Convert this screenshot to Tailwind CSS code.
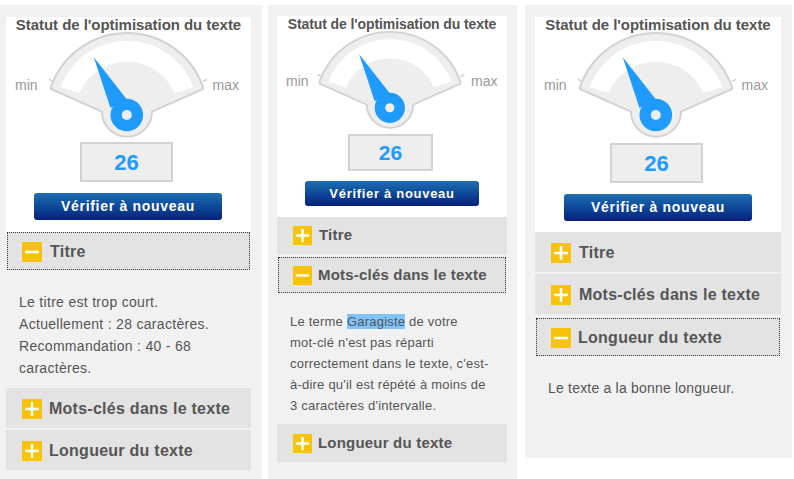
<!DOCTYPE html>
<html>
<head>
  <title>Statut de l'optimisation du texte</title>
  <script src="https://cdn.jsdelivr.net/npm/@tailwindcss/browser@4"></script>
</head>
<body class="bg-white font-['Liberation_Sans',Arial,sans-serif] text-[#555] overflow-hidden">
<div class="flex items-start w-[794px] h-[479px]">

  <!-- panel 1 : Titre open -->
  <div class="w-[262px] h-[474px] mt-[5px] pt-[12px] pl-[6px] bg-[#f1f1f1]">
    <div class="w-[245px] h-[215px] bg-white">
      <h2 class="h-[16px] text-center text-[15px] leading-[16px] font-bold tracking-[-0.05px] whitespace-nowrap">Statut de l'optimisation du texte</h2>
      <div class="flex -mt-[3px] pl-[9px]">
        <span class="w-[27.5px] mt-[46px] text-[14px] leading-[18px] text-[#999]">min</span>
        <svg class="w-[168px] h-[110px] shrink-0" viewBox="-4 0 168 110">
          <path d="M2 49.3L6 51.3M156 51.3L160 49.3" stroke="#ccc" stroke-width="1.5" fill="none"/>
          <path d="M4 57A80.5 80.5 0 0 1 156 57L156 59L105 81.7A24.5 24.5 0 0 1 55 81.7L4 59Z" fill="#eee" stroke="#d2d2d2" stroke-width="2" stroke-linejoin="round"/>
          <path d="M13.5 57A71 71 0 0 1 146.5 57L127.5 63A51.7 51.7 0 0 0 32.5 63Z" fill="#fff"/>
          <path d="M46.8 27.3L63.5 78L79.5 69Z" fill="#1e9bfd"/>
          <circle cx="79.8" cy="85" r="16.3" fill="#1e9bfd"/>
          <circle cx="79.8" cy="85" r="5" fill="#eee"/>
        </svg>
        <span class="mt-[46px] pl-[2px] text-[14px] leading-[18px] text-[#999]">max</span>
      </div>
      <div class="w-[93px] h-[40px] mt-[2px] ml-[74px] flex items-center justify-center bg-[#eee] border-2 border-[#d2d2d2] text-[22px] font-bold text-[#1e9bfd]">26</div>
      <div class="w-[188px] h-[27px] mt-[11px] ml-[28px] flex items-center justify-center rounded-[3px] bg-linear-to-b from-[#1f6fb2] to-[#0a1f7d] text-white text-[14px] font-bold tracking-[0.7px]">Vérifier à nouveau</div>
    </div>
    <div class="w-[243px] h-[38px] mx-[1px] pt-[2px] flex items-center gap-[8px] pl-[14px] bg-[#e3e3e3] border border-dotted border-[#333] text-[16px] font-bold tracking-[0.26px]">
      <svg class="w-[20px] h-[20px]" viewBox="0 0 20 20"><rect width="20" height="20" fill="#f7c30a"/><path d="M3 10H17" stroke="#fff" stroke-width="2.5"/></svg>
      <span>Titre</span>
    </div>
    <div class="h-[118px] pt-[21px] pl-[13px] w-[225px] text-[14px] leading-[22px] tracking-[0.3px]">Le titre est trop court.<br>Actuellement : 28 caractères.<br>Recommandation : 40 - 68 caractères.</div>
    <div class="flex flex-col gap-[2px]">
      <div class="w-[245px] h-[40px] pt-[2px] flex items-center gap-[7px] pl-[16px] bg-[#e3e3e3] text-[16px] font-bold tracking-[0.26px]">
        <svg class="w-[20px] h-[20px]" viewBox="0 0 20 20"><rect width="20" height="20" fill="#f7c30a"/><path d="M3 10H17M10 3V17" stroke="#fff" stroke-width="2.5"/></svg>
        <span>Mots-clés dans le texte</span>
      </div>
      <div class="w-[245px] h-[40px] pt-[2px] flex items-center gap-[7px] pl-[16px] bg-[#e3e3e3] text-[16px] font-bold tracking-[0.26px]">
        <svg class="w-[20px] h-[20px]" viewBox="0 0 20 20"><rect width="20" height="20" fill="#f7c30a"/><path d="M3 10H17M10 3V17" stroke="#fff" stroke-width="2.5"/></svg>
        <span>Longueur du texte</span>
      </div>
    </div>
  </div>

  <!-- panel 2 : Mots-clés open, drawn a bit smaller -->
  <div class="w-[249px] h-[474px] mt-[5px] ml-[6px] pt-[11px] pl-[9px] bg-[#f1f1f1]">
    <div class="w-[230px] h-[201px] bg-white">
      <h2 class="h-[16px] text-center text-[14px] leading-[16px] font-bold tracking-[-0.1px] whitespace-nowrap">Statut de l'optimisation du texte</h2>
      <div class="flex -mt-[3px] pl-[9px]">
        <span class="w-[26px] mt-[44px] text-[14px] leading-[17px] text-[#999]">min</span>
        <svg class="w-[156px] h-[102px] shrink-0" viewBox="-4 0 168 110">
          <path d="M2 49.3L6 51.3M156 51.3L160 49.3" stroke="#ccc" stroke-width="1.5" fill="none"/>
          <path d="M4 57A80.5 80.5 0 0 1 156 57L156 59L105 81.7A24.5 24.5 0 0 1 55 81.7L4 59Z" fill="#eee" stroke="#d2d2d2" stroke-width="2" stroke-linejoin="round"/>
          <path d="M13.5 57A71 71 0 0 1 146.5 57L127.5 63A51.7 51.7 0 0 0 32.5 63Z" fill="#fff"/>
          <path d="M46.8 27.3L63.5 78L79.5 69Z" fill="#1e9bfd"/>
          <circle cx="79.8" cy="85" r="16.3" fill="#1e9bfd"/>
          <circle cx="79.8" cy="85" r="5" fill="#eee"/>
        </svg>
        <span class="mt-[44px] pl-[3px] text-[14px] leading-[17px] text-[#999]">max</span>
      </div>
      <div class="w-[85px] h-[37px] mt-[3px] ml-[71px] flex items-center justify-center bg-[#eee] border-2 border-[#d2d2d2] text-[21px] font-bold text-[#1e9bfd]">26</div>
      <div class="w-[174px] h-[25px] mt-[10px] ml-[28px] flex items-center justify-center rounded-[3px] bg-linear-to-b from-[#1f6fb2] to-[#0a1f7d] text-white text-[13px] font-bold tracking-[0.7px]">Vérifier à nouveau</div>
    </div>
    <div class="w-[230px] h-[37px] flex items-center gap-[7px] pl-[16px] bg-[#e3e3e3] text-[15px] font-bold tracking-[0.2px]">
      <svg class="w-[19px] h-[19px]" viewBox="0 0 20 20"><rect width="20" height="20" fill="#f7c30a"/><path d="M3 10H17M10 3V17" stroke="#fff" stroke-width="2.5"/></svg>
      <span>Titre</span>
    </div>
    <div class="w-[228px] h-[36px] mt-[3px] mx-[1px] flex items-center gap-[6px] pl-[14px] bg-[#e3e3e3] border border-dotted border-[#333] text-[15px] font-bold tracking-[0.2px]">
      <svg class="w-[19px] h-[19px]" viewBox="0 0 20 20"><rect width="20" height="20" fill="#f7c30a"/><path d="M3 10H17" stroke="#fff" stroke-width="2.5"/></svg>
      <span>Mots-clés dans le texte</span>
    </div>
    <div class="h-[131px] pt-[18px] pl-[13px] w-[222px] text-[13px] leading-[21px] tracking-[0.22px] whitespace-nowrap">Le terme <span class="bg-[#7fc4fd]">Garagiste</span> de votre<br>mot-clé n'est pas réparti<br>correctement dans le texte, c'est-<br>à-dire qu'il est répété à moins de<br>3 caractères d'intervalle.</div>
    <div class="w-[230px] h-[38px] flex items-center gap-[6px] pl-[16px] bg-[#e3e3e3] text-[15px] font-bold tracking-[0.2px]">
      <svg class="w-[19px] h-[19px]" viewBox="0 0 20 20"><rect width="20" height="20" fill="#f7c30a"/><path d="M3 10H17M10 3V17" stroke="#fff" stroke-width="2.5"/></svg>
      <span>Longueur du texte</span>
    </div>
  </div>

  <!-- panel 3 : Longueur open -->
  <div class="w-[267px] h-[453px] mt-[5px] ml-[8px] pt-[12px] pl-[10px] bg-[#f1f1f1]">
    <div class="w-[246px] h-[215px] bg-white">
      <h2 class="h-[16px] text-center text-[15px] leading-[16px] font-bold tracking-[-0.05px] whitespace-nowrap">Statut de l'optimisation du texte</h2>
      <div class="flex -mt-[3px] pl-[9px]">
        <span class="w-[27.5px] mt-[46px] text-[14px] leading-[18px] text-[#999]">min</span>
        <svg class="w-[168px] h-[110px] shrink-0" viewBox="-4 0 168 110">
          <path d="M2 49.3L6 51.3M156 51.3L160 49.3" stroke="#ccc" stroke-width="1.5" fill="none"/>
          <path d="M4 57A80.5 80.5 0 0 1 156 57L156 59L105 81.7A24.5 24.5 0 0 1 55 81.7L4 59Z" fill="#eee" stroke="#d2d2d2" stroke-width="2" stroke-linejoin="round"/>
          <path d="M13.5 57A71 71 0 0 1 146.5 57L127.5 63A51.7 51.7 0 0 0 32.5 63Z" fill="#fff"/>
          <path d="M46.8 27.3L63.5 78L79.5 69Z" fill="#1e9bfd"/>
          <circle cx="79.8" cy="85" r="16.3" fill="#1e9bfd"/>
          <circle cx="79.8" cy="85" r="5" fill="#eee"/>
        </svg>
        <span class="mt-[46px] pl-[2px] text-[14px] leading-[18px] text-[#999]">max</span>
      </div>
      <div class="w-[93px] h-[40px] mt-[3px] ml-[75px] flex items-center justify-center bg-[#eee] border-2 border-[#d2d2d2] text-[22px] font-bold text-[#1e9bfd]">26</div>
      <div class="w-[188px] h-[27px] mt-[11px] ml-[29px] flex items-center justify-center rounded-[3px] bg-linear-to-b from-[#1f6fb2] to-[#0a1f7d] text-white text-[14px] font-bold tracking-[0.7px]">Vérifier à nouveau</div>
    </div>
    <div class="flex flex-col gap-[2px]">
      <div class="w-[246px] h-[40px] pt-[2px] flex items-center gap-[8px] pl-[16px] bg-[#e3e3e3] text-[16px] font-bold tracking-[0.26px]">
        <svg class="w-[20px] h-[20px]" viewBox="0 0 20 20"><rect width="20" height="20" fill="#f7c30a"/><path d="M3 10H17M10 3V17" stroke="#fff" stroke-width="2.5"/></svg>
        <span>Titre</span>
      </div>
      <div class="w-[246px] h-[40px] pt-[2px] flex items-center gap-[8px] pl-[16px] bg-[#e3e3e3] text-[16px] font-bold tracking-[0.26px]">
        <svg class="w-[20px] h-[20px]" viewBox="0 0 20 20"><rect width="20" height="20" fill="#f7c30a"/><path d="M3 10H17M10 3V17" stroke="#fff" stroke-width="2.5"/></svg>
        <span>Mots-clés dans le texte</span>
      </div>
    </div>
    <div class="w-[244px] h-[38px] mt-[4px] mx-[1px] pt-[2px] flex items-center gap-[7px] pl-[14px] bg-[#e3e3e3] border border-dotted border-[#333] text-[16px] font-bold tracking-[0.26px]">
      <svg class="w-[20px] h-[20px]" viewBox="0 0 20 20"><rect width="20" height="20" fill="#f7c30a"/><path d="M3 10H17" stroke="#fff" stroke-width="2.5"/></svg>
      <span>Longueur du texte</span>
    </div>
    <div class="pt-[21px] pl-[13px] text-[14px] leading-[22px] tracking-[0.2px]">Le texte a la bonne longueur.</div>
  </div>

</div>
</body>
</html>
